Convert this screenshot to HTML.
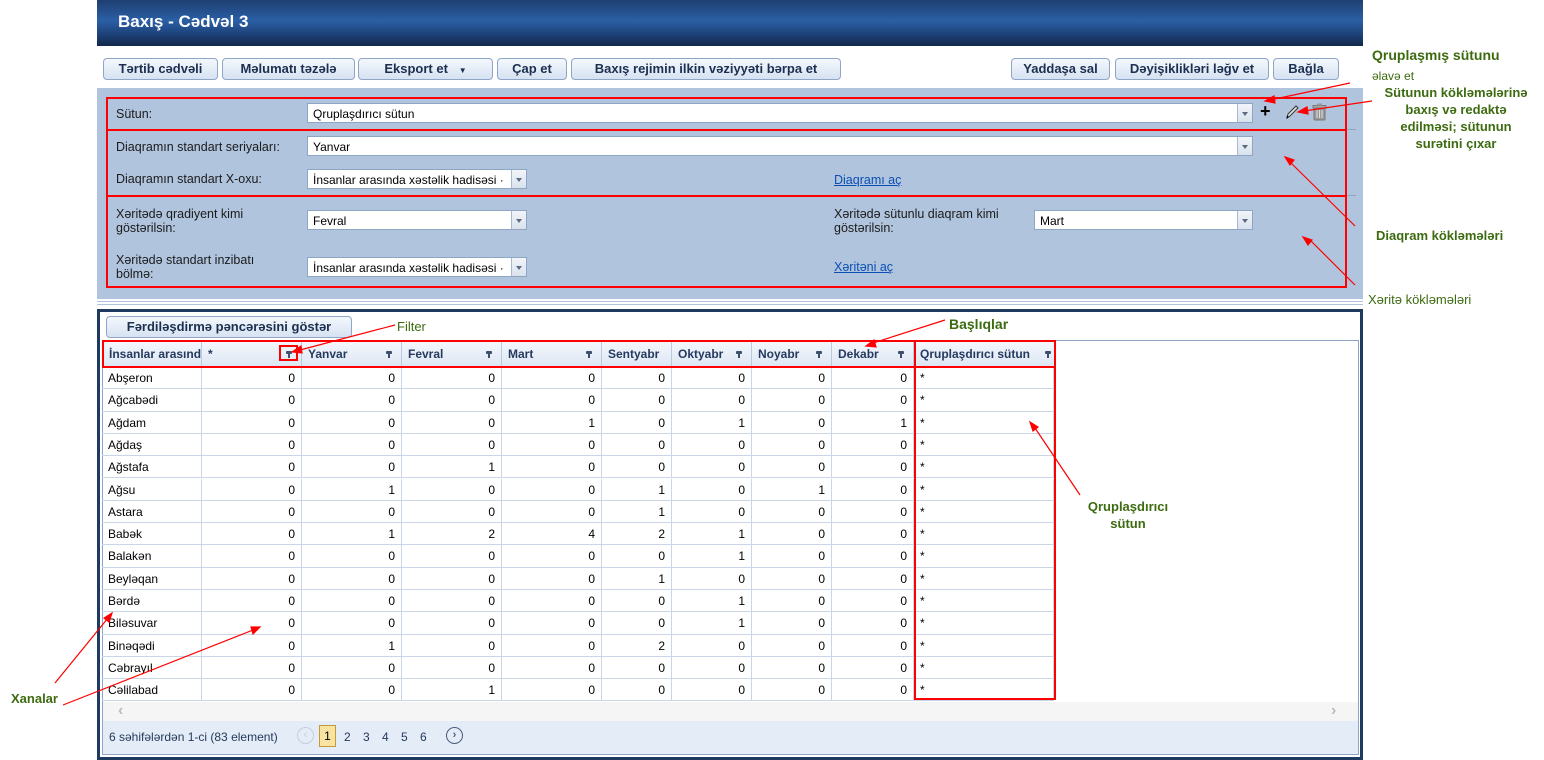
<!DOCTYPE html>
<html><head><meta charset="utf-8"><style>
*{box-sizing:border-box;margin:0;padding:0}
body{width:1544px;height:760px;background:#fff;font-family:"Liberation Sans",sans-serif;font-size:12px;color:#000;position:relative;overflow:hidden}
.a{position:absolute}
.hdr{left:97px;top:0;width:1266px;height:46px;background:linear-gradient(#1e3f72,#2b5fa5 45%,#1d4178 75%,#13274a);color:#fff;font-weight:bold;font-size:17px;padding:12px 0 0 21px}
.btn{position:absolute;top:58px;height:22px;border:1px solid #8fa6c6;border-radius:4px;background:linear-gradient(#f4f8fd,#d6e2f2);font-weight:bold;font-size:13px;color:#1c2f4f;text-align:center;line-height:20px}
.panel{left:97px;top:88px;width:1266px;height:211px;background:#b0c4de}
.lbl{position:absolute;font-size:12.5px;color:#1b1b1b;line-height:14px}
.inp{position:absolute;height:20px;background:#fff;border:1px solid #8ea6c4;font-size:12px;padding:3px 5px;white-space:nowrap;overflow:hidden}
.inp .dd{position:absolute;right:0;top:0;width:15px;height:18px;background:linear-gradient(#f2f5f9,#d9e2ee);border-left:1px solid #a9bad0}
.inp .dd:after{content:"";position:absolute;left:4px;top:8px;border:3.5px solid transparent;border-top:4px solid #5a6b82}
.lnk{position:absolute;color:#0b4fb3;text-decoration:underline;font-size:12.5px}
.red{position:absolute;border:2px solid #f00}
.g{color:#3d6b10;font-weight:bold;font-size:13px;position:absolute;text-align:center;line-height:17px}
.row{position:absolute;left:102px;height:22.3px;display:flex}
.c{border-right:1px solid #c8d6e8;border-bottom:1px solid #c8d6e8;height:100%;padding:0 6px;line-height:22px;text-align:right;font-size:12px}
.c:first-child{text-align:left}
.c:last-child{text-align:left}
.hc{border-right:1px solid #b9cae0;height:25px;line-height:24px;padding:0 6px;font-weight:bold;color:#243a5e;position:relative;font-size:12px;white-space:nowrap;overflow:hidden}
.f{position:absolute;right:9px;top:9px;width:6px;height:7px}
.f:before{content:"";position:absolute;left:0;top:0;width:6px;height:3px;background:#3c4f6b;border-radius:1px}
.f:after{content:"";position:absolute;left:2px;top:3px;width:2px;height:4px;background:#3c4f6b}
</style></head><body>
<div class="a hdr">Baxış - Cədvəl 3</div>

<div class="btn" style="left:103px;width:115px">Tərtib cədvəli</div>
<div class="btn" style="left:222px;width:133px">Məlumatı təzələ</div>
<div class="btn" style="left:358px;width:135px">Eksport et &nbsp;&nbsp;<span style="font-size:8px">▼</span></div>
<div class="btn" style="left:497px;width:70px">Çap et</div>
<div class="btn" style="left:571px;width:270px">Baxış rejimin ilkin vəziyyəti bərpa et</div>
<div class="btn" style="left:1011px;width:99px">Yaddaşa sal</div>
<div class="btn" style="left:1115px;width:154px">Dəyişiklikləri ləğv et</div>
<div class="btn" style="left:1273px;width:66px">Bağla</div>

<div class="a panel"></div>
<div class="a" style="left:97px;top:301px;width:1266px;height:1px;background:#b0c4de"></div>
<div class="a" style="left:97px;top:304px;width:1266px;height:1px;background:#b0c4de"></div>

<div class="lbl" style="left:116px;top:107px">Sütun:</div>
<div class="inp" style="left:307px;top:103px;width:946px">Qruplaşdırıcı sütun<div class="dd"></div></div>
<div class="a" style="left:1260px;top:102px;font-size:18px;font-weight:bold;line-height:18px">+</div>
<svg class="a" style="left:1284px;top:104px" width="16" height="16" viewBox="0 0 16 16"><path d="M3 14 L4 10 L12 2 L14 4 L6 12 Z" fill="#ddd" stroke="#333" stroke-width="1"/><path d="M3 14 L4 12" stroke="#000" stroke-width="1.5"/></svg>
<svg class="a" style="left:1311px;top:103px" width="17" height="18" viewBox="0 0 17 18"><rect x="3" y="5" width="11" height="12" rx="1" fill="#9a9a9a" stroke="#777"/><rect x="2" y="2.5" width="13" height="2.5" fill="#aaa" stroke="#777"/><rect x="6" y="0.5" width="5" height="2" fill="#999"/><path d="M6 7v8M8.5 7v8M11 7v8" stroke="#ddd"/></svg>
<div class="a" style="left:106px;top:129px;width:1250px;height:1px;background:#8ea6c4"></div>

<div class="lbl" style="left:116px;top:140px">Diaqramın standart seriyaları:</div>
<div class="inp" style="left:307px;top:136px;width:946px">Yanvar<div class="dd"></div></div>
<div class="lbl" style="left:116px;top:172px">Diaqramın standart X-oxu:</div>
<div class="inp" style="left:307px;top:169px;width:220px">İnsanlar arasında xəstəlik hadisəsi ·<div class="dd"></div></div>
<div class="lnk" style="left:834px;top:173px">Diaqramı aç</div>
<div class="a" style="left:106px;top:195px;width:1250px;height:1px;background:#8ea6c4"></div>

<div class="lbl" style="left:116px;top:207px">Xəritədə qradiyent kimi<br>göstərilsin:</div>
<div class="inp" style="left:307px;top:210px;width:220px">Fevral<div class="dd"></div></div>
<div class="lbl" style="left:834px;top:207px">Xəritədə sütunlu diaqram kimi<br>göstərilsin:</div>
<div class="inp" style="left:1034px;top:210px;width:219px">Mart<div class="dd"></div></div>
<div class="lbl" style="left:116px;top:253px">Xəritədə standart inzibatı<br>bölmə:</div>
<div class="inp" style="left:307px;top:257px;width:220px">İnsanlar arasında xəstəlik hadisəsi ·<div class="dd"></div></div>
<div class="lnk" style="left:834px;top:260px">Xəritəni aç</div>

<div class="red" style="left:106px;top:97px;width:1241px;height:191px"></div>
<div class="a" style="left:106px;top:129px;width:1241px;height:2px;background:#f00"></div>
<div class="a" style="left:106px;top:195px;width:1241px;height:2px;background:#f00"></div>

<div class="a" style="left:97px;top:309px;width:1266px;height:451px;border:3px solid #1e3a60;border-bottom:none"></div>
<div class="a" style="left:97px;top:757px;width:1266px;height:3px;background:#1e3a60"></div>
<div class="btn" style="left:106px;top:316px;width:246px;height:22px">Fərdiləşdirmə pəncərəsini göstər</div>
<div class="a" style="left:102px;top:340px;width:1257px;height:415px;border:1px solid #8ea6c4"></div>

<div class="a" style="left:103px;top:342px;height:25px;width:952px;display:flex;background:linear-gradient(#f4f7fc,#dde7f4);border-bottom:1px solid #b9cae0">
<div class="hc" style="width:99px">İnsanlar arasında</div>
<div class="hc" style="width:100px">*<span class="f"></span></div>
<div class="hc" style="width:100px">Yanvar<span class="f"></span></div>
<div class="hc" style="width:100px">Fevral<span class="f"></span></div>
<div class="hc" style="width:100px">Mart<span class="f"></span></div>
<div class="hc" style="width:70px">Sentyabr</div>
<div class="hc" style="width:80px">Oktyabr<span class="f"></span></div>
<div class="hc" style="width:80px">Noyabr<span class="f"></span></div>
<div class="hc" style="width:82px">Dekabr<span class="f"></span></div>
<div class="hc" style="width:140px;border-right:none">Qruplaşdırıcı sütun<span class="f" style="right:3px"></span></div>
</div>

<div class="row" style="top:367px"><div class="c" style="width:100px">Abşeron</div><div class="c" style="width:100px">0</div><div class="c" style="width:100px">0</div><div class="c" style="width:100px">0</div><div class="c" style="width:100px">0</div><div class="c" style="width:70px">0</div><div class="c" style="width:80px">0</div><div class="c" style="width:80px">0</div><div class="c" style="width:82px">0</div><div class="c" style="width:140px">*</div></div>
<div class="row" style="top:389.3px"><div class="c" style="width:100px">Ağcabədi</div><div class="c" style="width:100px">0</div><div class="c" style="width:100px">0</div><div class="c" style="width:100px">0</div><div class="c" style="width:100px">0</div><div class="c" style="width:70px">0</div><div class="c" style="width:80px">0</div><div class="c" style="width:80px">0</div><div class="c" style="width:82px">0</div><div class="c" style="width:140px">*</div></div>
<div class="row" style="top:411.6px"><div class="c" style="width:100px">Ağdam</div><div class="c" style="width:100px">0</div><div class="c" style="width:100px">0</div><div class="c" style="width:100px">0</div><div class="c" style="width:100px">1</div><div class="c" style="width:70px">0</div><div class="c" style="width:80px">1</div><div class="c" style="width:80px">0</div><div class="c" style="width:82px">1</div><div class="c" style="width:140px">*</div></div>
<div class="row" style="top:433.9px"><div class="c" style="width:100px">Ağdaş</div><div class="c" style="width:100px">0</div><div class="c" style="width:100px">0</div><div class="c" style="width:100px">0</div><div class="c" style="width:100px">0</div><div class="c" style="width:70px">0</div><div class="c" style="width:80px">0</div><div class="c" style="width:80px">0</div><div class="c" style="width:82px">0</div><div class="c" style="width:140px">*</div></div>
<div class="row" style="top:456.2px"><div class="c" style="width:100px">Ağstafa</div><div class="c" style="width:100px">0</div><div class="c" style="width:100px">0</div><div class="c" style="width:100px">1</div><div class="c" style="width:100px">0</div><div class="c" style="width:70px">0</div><div class="c" style="width:80px">0</div><div class="c" style="width:80px">0</div><div class="c" style="width:82px">0</div><div class="c" style="width:140px">*</div></div>
<div class="row" style="top:478.5px"><div class="c" style="width:100px">Ağsu</div><div class="c" style="width:100px">0</div><div class="c" style="width:100px">1</div><div class="c" style="width:100px">0</div><div class="c" style="width:100px">0</div><div class="c" style="width:70px">1</div><div class="c" style="width:80px">0</div><div class="c" style="width:80px">1</div><div class="c" style="width:82px">0</div><div class="c" style="width:140px">*</div></div>
<div class="row" style="top:500.8px"><div class="c" style="width:100px">Astara</div><div class="c" style="width:100px">0</div><div class="c" style="width:100px">0</div><div class="c" style="width:100px">0</div><div class="c" style="width:100px">0</div><div class="c" style="width:70px">1</div><div class="c" style="width:80px">0</div><div class="c" style="width:80px">0</div><div class="c" style="width:82px">0</div><div class="c" style="width:140px">*</div></div>
<div class="row" style="top:523.1px"><div class="c" style="width:100px">Babək</div><div class="c" style="width:100px">0</div><div class="c" style="width:100px">1</div><div class="c" style="width:100px">2</div><div class="c" style="width:100px">4</div><div class="c" style="width:70px">2</div><div class="c" style="width:80px">1</div><div class="c" style="width:80px">0</div><div class="c" style="width:82px">0</div><div class="c" style="width:140px">*</div></div>
<div class="row" style="top:545.4px"><div class="c" style="width:100px">Balakən</div><div class="c" style="width:100px">0</div><div class="c" style="width:100px">0</div><div class="c" style="width:100px">0</div><div class="c" style="width:100px">0</div><div class="c" style="width:70px">0</div><div class="c" style="width:80px">1</div><div class="c" style="width:80px">0</div><div class="c" style="width:82px">0</div><div class="c" style="width:140px">*</div></div>
<div class="row" style="top:567.7px"><div class="c" style="width:100px">Beyləqan</div><div class="c" style="width:100px">0</div><div class="c" style="width:100px">0</div><div class="c" style="width:100px">0</div><div class="c" style="width:100px">0</div><div class="c" style="width:70px">1</div><div class="c" style="width:80px">0</div><div class="c" style="width:80px">0</div><div class="c" style="width:82px">0</div><div class="c" style="width:140px">*</div></div>
<div class="row" style="top:590px"><div class="c" style="width:100px">Bərdə</div><div class="c" style="width:100px">0</div><div class="c" style="width:100px">0</div><div class="c" style="width:100px">0</div><div class="c" style="width:100px">0</div><div class="c" style="width:70px">0</div><div class="c" style="width:80px">1</div><div class="c" style="width:80px">0</div><div class="c" style="width:82px">0</div><div class="c" style="width:140px">*</div></div>
<div class="row" style="top:612.3px"><div class="c" style="width:100px">Biləsuvar</div><div class="c" style="width:100px">0</div><div class="c" style="width:100px">0</div><div class="c" style="width:100px">0</div><div class="c" style="width:100px">0</div><div class="c" style="width:70px">0</div><div class="c" style="width:80px">1</div><div class="c" style="width:80px">0</div><div class="c" style="width:82px">0</div><div class="c" style="width:140px">*</div></div>
<div class="row" style="top:634.6px"><div class="c" style="width:100px">Binəqədi</div><div class="c" style="width:100px">0</div><div class="c" style="width:100px">1</div><div class="c" style="width:100px">0</div><div class="c" style="width:100px">0</div><div class="c" style="width:70px">2</div><div class="c" style="width:80px">0</div><div class="c" style="width:80px">0</div><div class="c" style="width:82px">0</div><div class="c" style="width:140px">*</div></div>
<div class="row" style="top:656.9px"><div class="c" style="width:100px">Cəbrayıl</div><div class="c" style="width:100px">0</div><div class="c" style="width:100px">0</div><div class="c" style="width:100px">0</div><div class="c" style="width:100px">0</div><div class="c" style="width:70px">0</div><div class="c" style="width:80px">0</div><div class="c" style="width:80px">0</div><div class="c" style="width:82px">0</div><div class="c" style="width:140px">*</div></div>
<div class="row" style="top:679.2px"><div class="c" style="width:100px">Cəlilabad</div><div class="c" style="width:100px">0</div><div class="c" style="width:100px">0</div><div class="c" style="width:100px">1</div><div class="c" style="width:100px">0</div><div class="c" style="width:70px">0</div><div class="c" style="width:80px">0</div><div class="c" style="width:80px">0</div><div class="c" style="width:82px">0</div><div class="c" style="width:140px">*</div></div>

<div class="a" style="left:103px;top:702px;width:1255px;height:19px;background:#f5f5f5"></div>
<div class="a" style="left:118px;top:702px;color:#bbb;font-size:16px;font-weight:bold">‹</div>
<div class="a" style="left:1331px;top:702px;color:#bbb;font-size:16px;font-weight:bold">›</div>
<div class="a" style="left:103px;top:721px;width:1255px;height:33px;background:#e3ecf7"></div>
<div class="a" style="left:109px;top:730px;color:#253a5a;font-size:12px">6 səhifələrdən 1-ci (83 element)</div>
<div class="a" style="left:297px;top:727px;width:17px;height:17px;border:1px solid #c3cfdf;border-radius:50%;color:#c3cfdf;font-size:11px;text-align:center;line-height:14px">‹</div>
<div class="a" style="left:319px;top:725px;width:17px;height:22px;border:1px solid #c49a3a;background:#f8e3a0;text-align:center;line-height:20px;font-size:12px">1</div>
<div class="a" style="left:344px;top:730px;font-size:12px;word-spacing:9px;color:#253a5a">2 3 4 5 6</div>
<div class="a" style="left:446px;top:727px;width:17px;height:17px;border:1.5px solid #4a5d7a;border-radius:50%;color:#4a5d7a;font-size:11px;font-weight:bold;text-align:center;line-height:14px">›</div>

<div class="red" style="left:102px;top:340px;width:954px;height:28px"></div>
<div class="red" style="left:914px;top:340px;width:142px;height:360px"></div>
<div class="red" style="left:279px;top:345px;width:19px;height:16px"></div>

<div class="g" style="left:1372px;top:47px;font-size:14px">Qruplaşmış sütunu</div>
<div class="g" style="left:1372px;top:68px;font-weight:normal;font-size:12px">əlavə et</div>
<div class="g" style="left:1366px;top:84px;width:180px;font-size:13px">Sütunun kökləmələrinə<br>baxış və redaktə<br>edilməsi; sütunun<br>surətini çıxar</div>
<div class="g" style="left:1376px;top:227px">Diaqram kökləmələri</div>
<div class="g" style="left:1368px;top:291px;font-weight:normal">Xəritə kökləmələri</div>
<div class="g" style="left:397px;top:318px;font-weight:normal">Filter</div>
<div class="g" style="left:949px;top:316px;font-size:14px">Başlıqlar</div>
<div class="g" style="left:1078px;top:498px;width:100px">Qruplaşdırıcı<br>sütun</div>
<div class="g" style="left:11px;top:690px">Xanalar</div>

<svg class="a" style="left:0;top:0" width="1544" height="760">
<g stroke="#f00" stroke-width="1.2" fill="#f00">
<line x1="1350" y1="83" x2="1270" y2="100"/><path d="M1265 101l9-5 1 7z"/>
<line x1="1372" y1="101" x2="1304" y2="111"/><path d="M1298 112l9-5 1 7z"/>
<line x1="1355" y1="226" x2="1290" y2="162"/><path d="M1285 157l9 3-4 5z"/>
<line x1="1355" y1="285" x2="1310" y2="240"/><path d="M1303 237l9 3-4 5z"/>
<line x1="395" y1="325" x2="300" y2="350"/><path d="M292 352l9-6 1 7z"/>
<line x1="945" y1="320" x2="873" y2="343"/><path d="M866 346l8-6 2 7z"/>
<line x1="1080" y1="495" x2="1035" y2="428"/><path d="M1030 422l8 5-5 4z"/>
<line x1="55" y1="683" x2="108" y2="618"/><path d="M112 613l-3 9-5-4z"/>
<line x1="63" y1="705" x2="253" y2="630"/><path d="M260 627l-7 7-2-7z"/>
</g></svg>
</body></html>
